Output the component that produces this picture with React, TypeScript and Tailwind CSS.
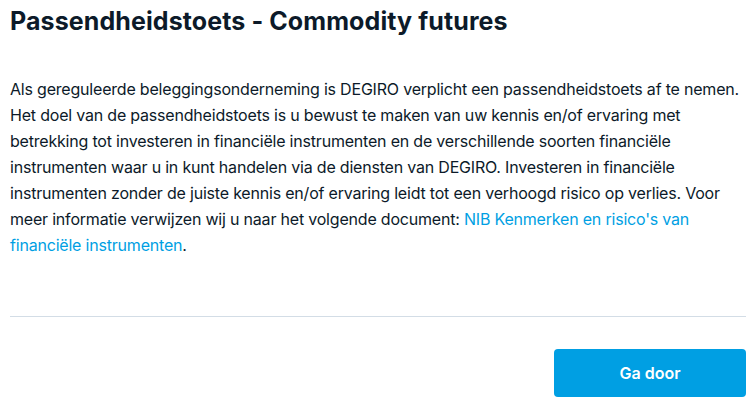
export default function App() {
    return (
        <div className="w-[752px] h-[411px] bg-white pl-[10px] pr-[6px] font-['Inter',sans-serif] text-[#0c1a29]">
            <h1 className="pt-[7px] text-[25px] leading-[28px] font-bold tracking-[0.1px]">
                Passendheidstoets - Commodity futures
            </h1>
            <p className="mt-[41px] text-[16px] leading-[26px] tracking-[-0.2px]">
                Als gereguleerde beleggingsonderneming is DEGIRO verplicht een
                passendheidstoets af te nemen. Het doel van de
                passendheidstoets is u bewust te maken van uw kennis en/of
                ervaring met betrekking tot investeren in financiële
                instrumenten en de verschillende soorten financiële
                instrumenten waar u in kunt handelen via de diensten van
                DEGIRO. Investeren in financiële instrumenten zonder de juiste
                kennis en/of ervaring leidt tot een verhoogd risico op verlies.
                Voor meer informatie verwijzen wij u naar het volgende document:{' '}
                <a href="#" className="text-[#009fe3]">
                    NIB Kenmerken en risico's van financiële instrumenten
                </a>
                .
            </p>
            <div className="mt-[58px] border-t border-[#d3dde6]" />
            <div className="flex justify-end pt-[32px]">
                <button className="w-[192px] h-[48px] rounded-[4px] bg-[#009fe3] text-white text-[16px] font-semibold">
                    Ga door
                </button>
            </div>
        </div>
    );
}
